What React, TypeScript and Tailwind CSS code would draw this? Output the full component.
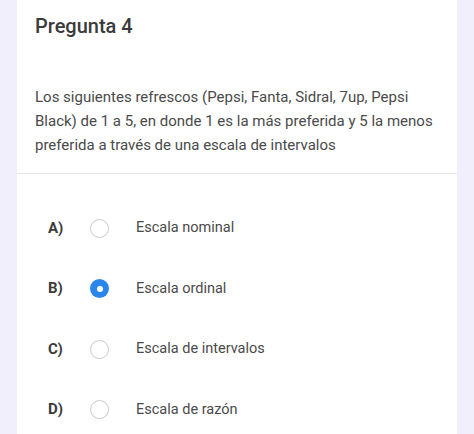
const OPTIONS = [
  { key: 'A)', label: 'Escala nominal', checked: false },
  { key: 'B)', label: 'Escala ordinal', checked: true },
  { key: 'C)', label: 'Escala de intervalos', checked: false },
  { key: 'D)', label: 'Escala de razón', checked: false },
]

function Radio({ checked }: { checked: boolean }) {
  if (checked) {
    return (
      <span className="flex h-[19px] w-[19px] items-center justify-center rounded-full bg-[#2a86ea]">
        <span className="h-[6px] w-[6px] rounded-full bg-white" />
      </span>
    )
  }
  return <span className="h-[19px] w-[19px] rounded-full border border-[#c9c9c9] bg-white" />
}

export default function App() {
  return (
    <div className="h-[434px] w-[474px] overflow-hidden bg-[#f1effb] px-[17px] font-['Roboto',sans-serif]">
      <div className="h-full bg-white">
        <div className="px-[18px] pt-[12px] pb-[33px]">
          <h2 className="text-[20px] font-medium leading-[28px] text-[#3b3b3b]">Pregunta 4</h2>
        </div>
        <div className="border-b border-[#e6e6e6] pl-[18px] pr-[8px] pt-[12px] pb-[16px]">
          <p className="text-[15px] leading-[24px] text-[#4a4a4a]">
            Los siguientes refrescos (Pepsi, Fanta, Sidral, 7up, Pepsi Black) de 1 a 5, en donde 1 es la más preferida y 5 la menos preferida a través de una escala de intervalos
          </p>
        </div>
        <div className="flex flex-col gap-[40.5px] pt-[44px]">
          {OPTIONS.map((o) => (
            <div key={o.key} className="flex h-[20px] items-center">
              <span className="w-[73px] pl-[31px] text-[15px] font-bold text-[#3b3b3b]">{o.key}</span>
              <Radio checked={o.checked} />
              <span className="ml-[27px] text-[14.5px] text-[#4a4a4a]">{o.label}</span>
            </div>
          ))}
        </div>
      </div>
    </div>
  )
}
